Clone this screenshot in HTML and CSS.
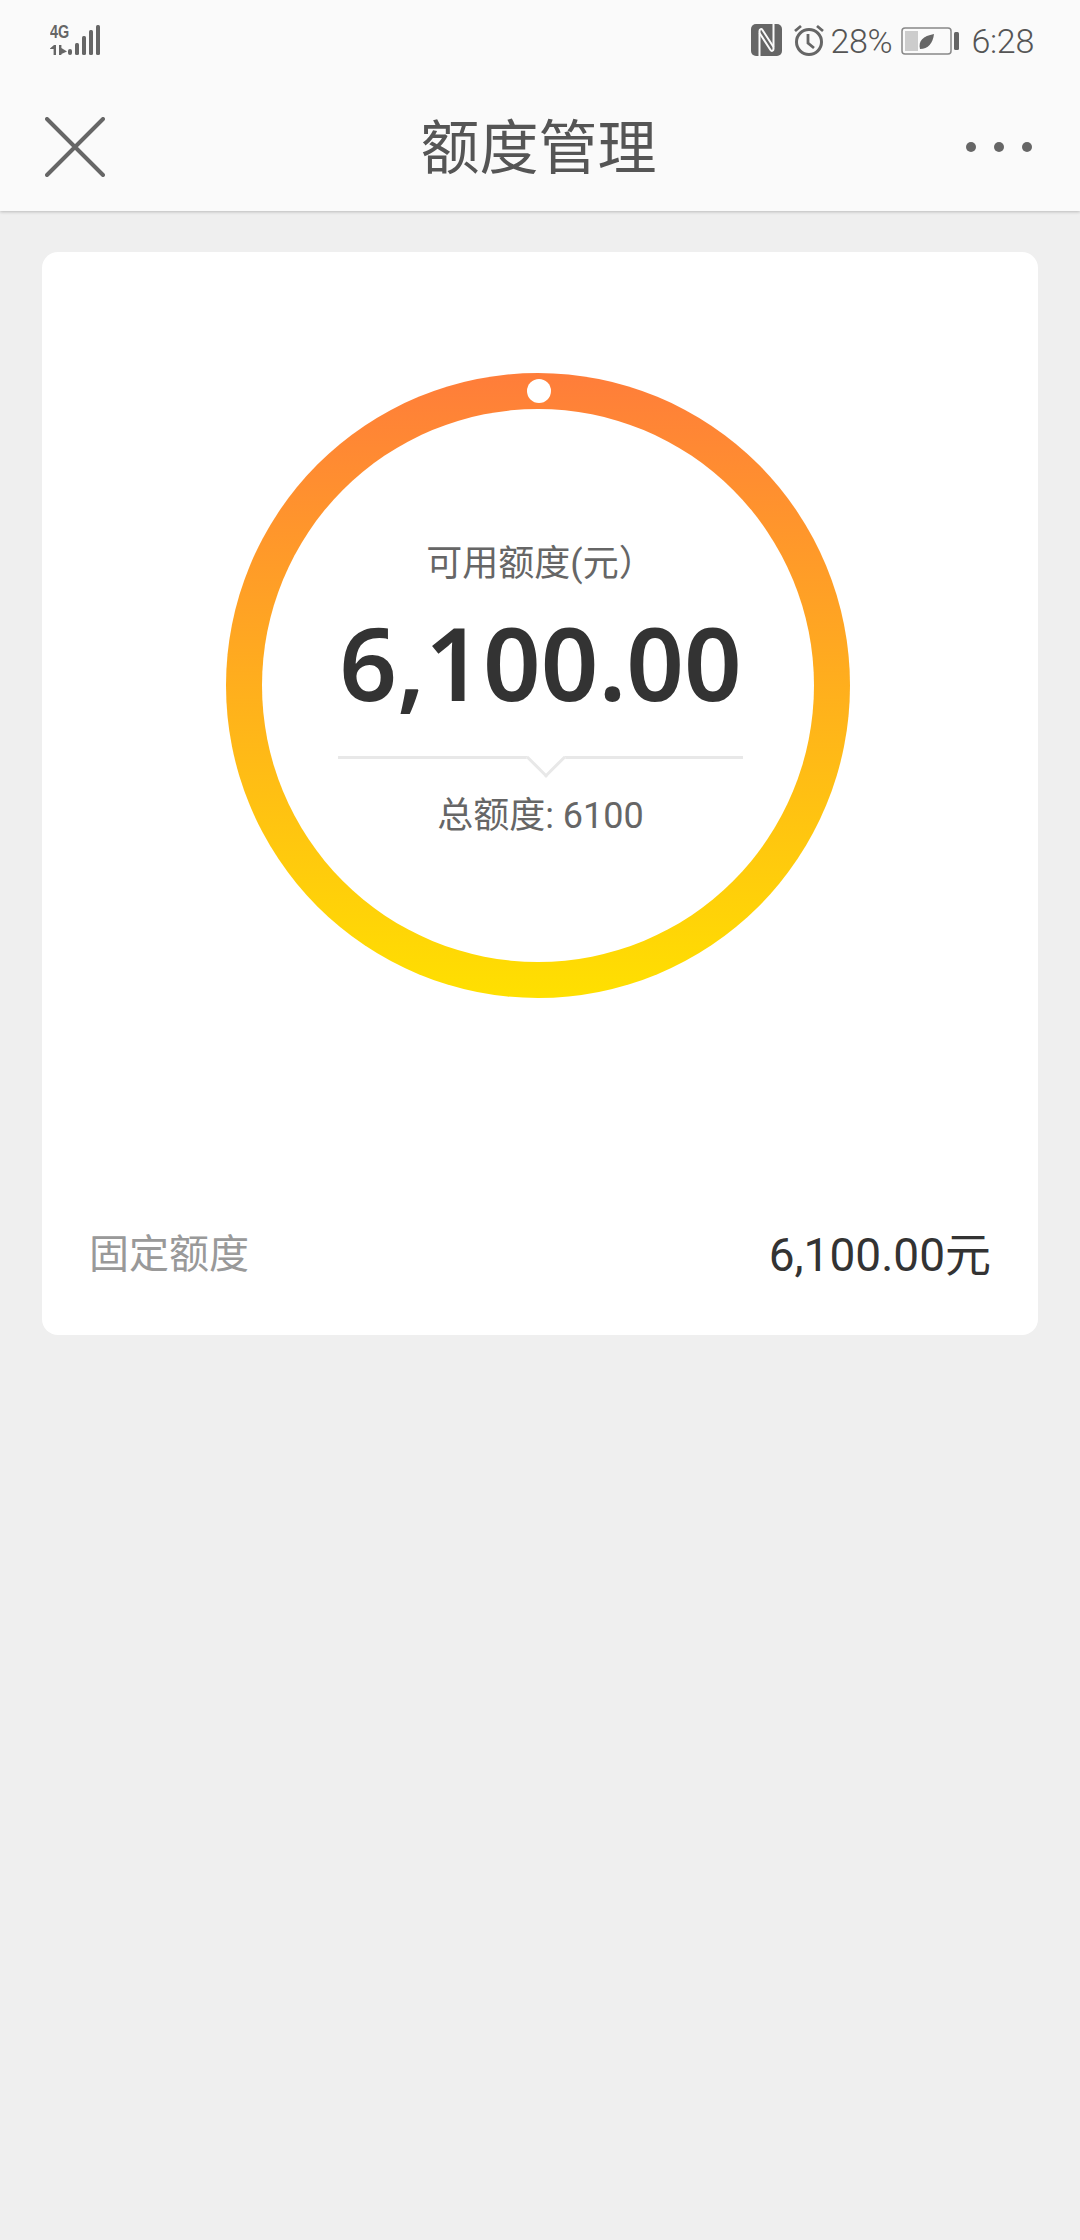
FILE: index.html
```html
<!DOCTYPE html>
<html lang="zh-CN">
<head>
    <meta charset="UTF-8" />
    <meta name="viewport" content="width=device-width, initial-scale=1" />
    <title>额度管理</title>
    <link rel="stylesheet" href="styles.css">
</head>
<body>
    <header class="top">
        <div class="status">
            <div class="signal">
                <div class="net">
                    <span class="net-label">4G</span>
                    <svg class="net-arrows" width="18" height="10" viewBox="0 0 18 10">
                        <path d="M0 3.500 4 0h2v10H3.600V4H0zM9 0h2.400v3L17 6.500 11.400 9v1H9z" fill="#666"/>
                    </svg>
                </div>
                <svg class="bars" width="32" height="30" viewBox="0 0 32 30">
                    <rect x="0" y="24" width="4" height="6" rx="2" fill="#666"/>
                    <rect x="7" y="18" width="4" height="12" rx="1.500" fill="#666"/>
                    <rect x="14" y="11" width="4" height="19" rx="1.500" fill="#666"/>
                    <rect x="21" y="5" width="4" height="25" rx="1.500" fill="#666"/>
                    <rect x="28" y="0" width="4" height="30" rx="1.500" fill="#666"/>
                </svg>
            </div>
            <div class="sys">
                <svg class="nfc" width="31" height="32" viewBox="0 0 31 32">
                    <rect width="31" height="32" rx="5" fill="#666"/>
                    <path d="M8.500 32V7c0-2 2-2.500 3-1l11 17" fill="none" stroke="#fafafa" stroke-width="2"/>
                    <path d="M22.500 0v25c0 2-2 2.500-3 1L8.500 9" fill="none" stroke="#fafafa" stroke-width="2"/>
                </svg>
                <svg class="alarm" width="32" height="32" viewBox="0 0 32 32">
                    <circle cx="16" cy="18" r="12.500" fill="none" stroke="#666" stroke-width="3"/>
                    <path d="M15 10v9l6 5" fill="none" stroke="#666" stroke-width="2.800"/>
                    <path d="M2 7l6-5M30 7l-6-5" fill="none" stroke="#666" stroke-width="2.800"/>
                </svg>
                <span class="pct">28%</span>
                <svg class="battery" width="58" height="28" viewBox="0 0 58 28">
                    <rect x="1" y="1" width="49" height="26" rx="3" fill="none" stroke="#888" stroke-width="1.500"/>
                    <rect x="4" y="4" width="13" height="20" fill="#ccc"/>
                    <path d="M19 22c-2-8 3-13 14-15-1 9-6 15-14 15z" fill="#666"/>
                    <rect x="53" y="5" width="5" height="18" rx="1.500" fill="#666"/>
                </svg>
                <span class="clock">6:28</span>
            </div>
        </div>
        <nav class="bar">
            <svg class="close" width="60" height="60" viewBox="0 0 60 60">
                <path d="M2 2l56 56M58 2 2 58" stroke="#666" stroke-width="4" stroke-linecap="round"/>
            </svg>
            <h1>额度管理</h1>
            <div class="more"><i></i><i></i><i></i></div>
        </nav>
    </header>

    <main class="card">
        <div class="ring">
            <span class="ring-dot"></span>
            <div class="ring-inner">
                <p class="avail-label">可用额度(元）</p>
                <p class="avail-num">6,100.00</p>
                <div class="split"><span class="notch"></span></div>
                <p class="total">总额度: 6100</p>
            </div>
        </div>
        <div class="row">
            <span class="row-name">固定额度</span>
            <span class="row-val">6,100.00元</span>
        </div>
    </main>
</body>
</html>
```

FILE: styles.css
```css
* {
    box-sizing: border-box;
}
body {
    margin: 0;
    height: 2240px;
    background: #efefef;
    font-family: Roboto, "Noto Sans CJK SC", sans-serif;
    color: #666;
}
p, h1 {
    margin: 0;
    font-weight: normal;
}
.top {
    height: 211px;
    background: #fafafa;
    box-shadow: 0 1px 3px rgba(0, 0, 0, 0.22);
}
.status {
    height: 82px;
    padding: 25px 46px 0 50px;
    display: flex;
    justify-content: space-between;
}
.signal {
    display: flex;
    align-items: flex-start;
}
.net {
    width: 18px;
    display: flex;
    flex-direction: column;
    gap: 6px;
}
.net-label {
    font-family: "Liberation Sans", sans-serif;
    font-weight: bold;
    font-size: 18px;
    line-height: 14px;
    display: block;
    transform: scaleX(0.8);
    transform-origin: left;
}
.sys {
    display: flex;
    align-items: flex-start;
}
.nfc {
    margin-right: 11px;
    margin-top: -1px;
}
.pct, .clock {
    font-size: 34px;
    line-height: 34px;
    letter-spacing: -0.3px;
    font-weight: 300;
    color: #555;
    margin-top: -1px;
}
.alarm {
    margin-right: 6px;
    margin-top: -1px;
}
.battery {
    margin: 2px 12px 0 9px;
}
.bar {
    height: 129px;
    padding: 0 48px 0 45px;
    display: flex;
    align-items: center;
    justify-content: space-between;
}
.bar h1 {
    font-size: 59px;
    color: #555;
    line-height: 70px;
    margin: 4px 0 0 6px;
}
.more {
    width: 66px;
    display: flex;
    justify-content: space-between;
}
.more i {
    width: 10px;
    height: 10px;
    border-radius: 50%;
    background: #666;
}
.card {
    margin: 41px 42px 0;
    height: 1083px;
    background: #fff;
    border-radius: 16px;
    padding: 121px 47px 0;
}
.ring {
    position: relative;
    width: 624px;
    height: 625px;
    margin: 0 auto;
    left: -2px;
    padding: 36px;
    border-radius: 50%;
    background: linear-gradient(to bottom, #ff7d3a, #ffe000);
}
.ring-dot {
    position: absolute;
    top: 6px;
    left: 301px;
    width: 24px;
    height: 24px;
    border-radius: 50%;
    background: #fff;
}
.ring-inner {
    height: 100%;
    border-radius: 50%;
    background: #fff;
    display: flex;
    flex-direction: column;
    align-items: center;
    padding: 130px 0 0 5px;
}
.avail-label {
    font-size: 36px;
    line-height: 50px;
}
.avail-num {
    font-family: "Noto Sans", sans-serif;
    font-weight: 600;
    font-size: 101px;
    line-height: 130px;
    margin-top: 8px;
    color: #333;
}
.split {
    position: relative;
    width: 405px;
    height: 3px;
    margin-top: 29px;
    background: #e8e8e8;
}
.notch {
    position: absolute;
    left: 194px;
    top: -12px;
    width: 28px;
    height: 28px;
    background: #fff;
    border-right: 3px solid #e8e8e8;
    border-bottom: 3px solid #e8e8e8;
    transform: rotate(45deg);
}
.total {
    font-size: 36px;
    line-height: 50px;
    margin-top: 32px;
}
.row {
    margin-top: 220px;
    display: flex;
    justify-content: space-between;
    align-items: center;
}
.row-name {
    font-size: 40px;
    color: #999;
}
.row-val {
    font-size: 46px;
    color: #333;
}
```
